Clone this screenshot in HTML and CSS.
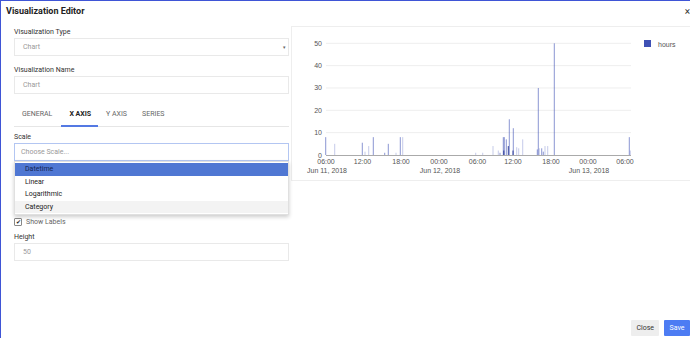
FILE: index.html
```html
<!DOCTYPE html>
<html lang="en">
<head>
  <meta charset="UTF-8" />
  <title>Visualization Editor</title>
  <link rel="stylesheet" href="styles.css">
</head>
<body>

  <div class="modal">
    <header class="modal-header">
      <span class="title">Visualization Editor</span>
      <span class="close">&times;</span>
    </header>

    <div class="modal-body">
      <div class="editor">
        <div class="field">
          <label>Visualization Type</label>
          <div class="input select">Chart<span class="caret">&#9662;</span></div>
        </div>
        <div class="field">
          <label>Visualization Name</label>
          <div class="input">Chart</div>
        </div>

        <ul class="tabs">
          <li>General</li>
          <li class="active">X Axis</li>
          <li>Y Axis</li>
          <li>Series</li>
        </ul>

        <div class="field scale">
          <label>Scale</label>
          <div class="input focused">Choose Scale...</div>
          <!-- open dropdown -->
          <ul class="menu">
            <li class="hl">Datetime</li>
            <li>Linear</li>
            <li>Logarithmic</li>
            <li class="hover">Category</li>
          </ul>
        </div>

        <div class="check">
          <span class="box">&#10004;</span> Show Labels
        </div>
        <div class="field">
          <label>Height</label>
          <div class="input">50</div>
        </div>
      </div>

      <div class="preview">
        <svg id="chart" width="398" height="153" viewBox="292 27 398 153"></svg>
      </div>
    </div>

    <footer class="modal-footer">
      <button class="btn">Close</button>
      <button class="btn primary">Save</button>
    </footer>
  </div>

  <script src="chart.js"></script>
</body>
</html>
```

FILE: styles.css
```css
html, body {
  margin: 0;
  height: 100%;
}

body {
  font-family: Roboto, "Liberation Sans", sans-serif;
  background: #fff;
  color: #333;
  overflow: hidden;
}

.modal {
  height: 100vh;
  box-sizing: border-box;
  border-left: 1px solid #3f55d6;
  border-top: 1px solid #3f55d6;
  display: flex;
  flex-direction: column;
}

.modal-header {
  display: flex;
  justify-content: space-between;
  align-items: center;
  height: 19px;
  padding: 1px 0 0 5px;
  box-sizing: border-box;
}

.title {
  font-size: 9px;
  font-weight: 700;
  color: #222;
}

.close {
  font-size: 10px;
  color: #333;
}

.modal-body {
  display: flex;
  align-items: flex-start;
  gap: 2px;
  padding-left: 13px;
}

.editor {
  width: 275px;
  flex: none;
  padding-top: 6px;
}

.field {
  margin-bottom: 8px;
}

.field label {
  display: block;
  font-size: 7px;
  font-weight: 400;
  line-height: 9px;
  padding-top: 2px;
  color: #333;
  margin-bottom: 1px;
}

.input {
  position: relative;
  height: 18px;
  box-sizing: border-box;
  border: 1px solid #e9e9e9;
  padding: 0 8px;
  font-size: 7px;
  line-height: 16px;
  color: #999;
}

.input.focused {
  border-color: #b3c6f2;
  padding-left: 6px;
}

.caret {
  position: absolute;
  right: 2px;
  top: 0;
  font-size: 5px;
  color: #666;
}

.tabs {
  list-style: none;
  margin: 5px 0 4px;
  padding: 0;
  display: flex;
  border-bottom: 1px solid #e6e6e6;
}

.tabs li {
  padding: 0 7px 0 8px;
  height: 25px;
  line-height: 25px;
  font-size: 7px;
  font-weight: 400;
  text-transform: uppercase;
  color: #666;
  margin-bottom: -1px;
  border-bottom: 2px solid transparent;
  box-sizing: border-box;
}

.tabs li:first-child {
  padding-right: 9px;
}

.tabs li.active {
  color: #222;
  font-weight: 700;
  border-bottom-color: #5479e3;
}

.scale {
  position: relative;
}

.menu {
  position: absolute;
  left: 0;
  right: 0;
  top: 30px;
  margin: 0;
  padding: 1px 0 1px;
  list-style: none;
  background: #fff;
  border: 1px solid #e0e0e0;
  box-shadow: 0 2px 4px rgba(0, 0, 0, .2);
  z-index: 10;
}

.menu li {
  height: 12.5px;
  line-height: 12.5px;
  padding-left: 10px;
  font-size: 7px;
  font-weight: 400;
  color: #222;
}

.menu li.hl {
  background: #4f77d3;
  color: #142553;
}

.menu li.hover {
  background: #f3f3f3;
}

.check {
  display: flex;
  align-items: center;
  gap: 4px;
  font-size: 7px;
  color: #666;
  margin: 57px 0 5px;
}

.check .box {
  width: 6px;
  height: 6px;
  border: 1px solid #888;
  border-radius: 1px;
  font-size: 6px;
  line-height: 6px;
  text-align: center;
  color: #222;
}

.preview {
  flex: 1;
  margin-top: 6px;
  border: 1px solid #eee;
  border-right: none;
  height: 153px;
}

#chart {
  display: block;
  font-family: "Liberation Sans", Arial, sans-serif;
  font-size: 7px;
}

.modal-footer {
  margin-top: auto;
  display: flex;
  justify-content: flex-end;
  gap: 5px;
  padding-bottom: 2px;
}

.btn {
  height: 16px;
  border: none;
  border-radius: 1px;
  padding: 0 5px;
  font-family: Roboto, sans-serif;
  font-size: 7px;
  background: #eee;
  color: #333;
}

.btn.primary {
  background: #4d7cf3;
  color: #fff;
  width: 26px;
}
```

FILE: chart.js
```js
var svg = document.getElementById('chart');
var NS = 'http://www.w3.org/2000/svg';

var base = 155;     // y of the 0 line
var unit = 2.234;   // px per hour value
var left = 326, right = 631;

function el(tag, attrs, text) {
  var e = document.createElementNS(NS, tag);
  for (var k in attrs) e.setAttribute(k, attrs[k]);
  if (text) e.textContent = text;
  svg.appendChild(e);
  return e;
}

// grid + y labels
for (var v = 0; v <= 50; v += 10) {
  var y = base - v * unit;
  if (v > 0) el('line', { x1: left, x2: right, y1: y, y2: y, stroke: '#eee', 'stroke-width': 1 });
  el('text', { x: 322, y: y + 2.5, 'text-anchor': 'end', fill: '#555' }, String(v));
}

// bars: [x, value, shade]
var bars = [
  [325.7, 8, 1], [334.7, 5, 0], [362.3, 5.5, 1], [365, 1.5, 0], [368.7, 4, 0],
  [373.3, 8, 1], [384.7, 1, 1], [388.3, 5, 1], [396, 1, 0], [400.3, 8, 1],
  [402.7, 8, 0], [475.7, 1, 0], [482.7, 1, 0], [493, 4, 0], [498.3, 2, 0],
  [500, 1, 1], [503.3, 8, 1], [504.3, 8, 1], [503.8, 2, 2], [506.3, 7, 1],
  [508.3, 4, 2], [509.3, 16, 1], [513.3, 12, 1], [513, 2, 2], [516.7, 3.5, 0],
  [518.7, 3, 0], [522.7, 7, 0], [537.3, 2.5, 1], [538.3, 30, 1], [539.3, 3, 0],
  [541.7, 3, 1], [543.3, 1.5, 1], [545, 4, 0], [547.7, 4, 0], [554.3, 50, 1],
  [629.3, 8, 1], [630.3, 2, 0]
];
var shades = ['rgba(63,81,181,.3)', 'rgba(63,81,181,.6)', 'rgba(40,55,150,.95)'];
bars.forEach(function (b) {
  var h = b[1] * unit;
  el('rect', { x: b[0] - 0.5, y: base - h, width: 1, height: h, fill: shades[b[2]] });
});

// axis
el('line', { x1: left, x2: right, y1: base + 0.5, y2: base + 0.5, stroke: '#aaa', 'stroke-width': 1.2 });

// x labels
var ticks = [
  [326, '06:00', 'Jun 11, 2018'], [362.5, '12:00'], [401, '18:00'],
  [439, '00:00', 'Jun 12, 2018'], [477.5, '06:00'], [513, '12:00'],
  [551, '18:00'], [588, '00:00', 'Jun 13, 2018'], [625, '06:00']
];
ticks.forEach(function (t) {
  el('text', { x: t[0], y: 164, 'text-anchor': 'middle', fill: '#555' }, t[1]);
  if (t[2]) el('text', { x: t[0] + 1, y: 172.5, 'text-anchor': 'middle', fill: '#555' }, t[2]);
});

// legend
el('rect', { x: 644, y: 40, width: 7, height: 7, fill: '#3f51b5' });
el('text', { x: 658, y: 46.5, fill: '#555' }, 'hours');
```
